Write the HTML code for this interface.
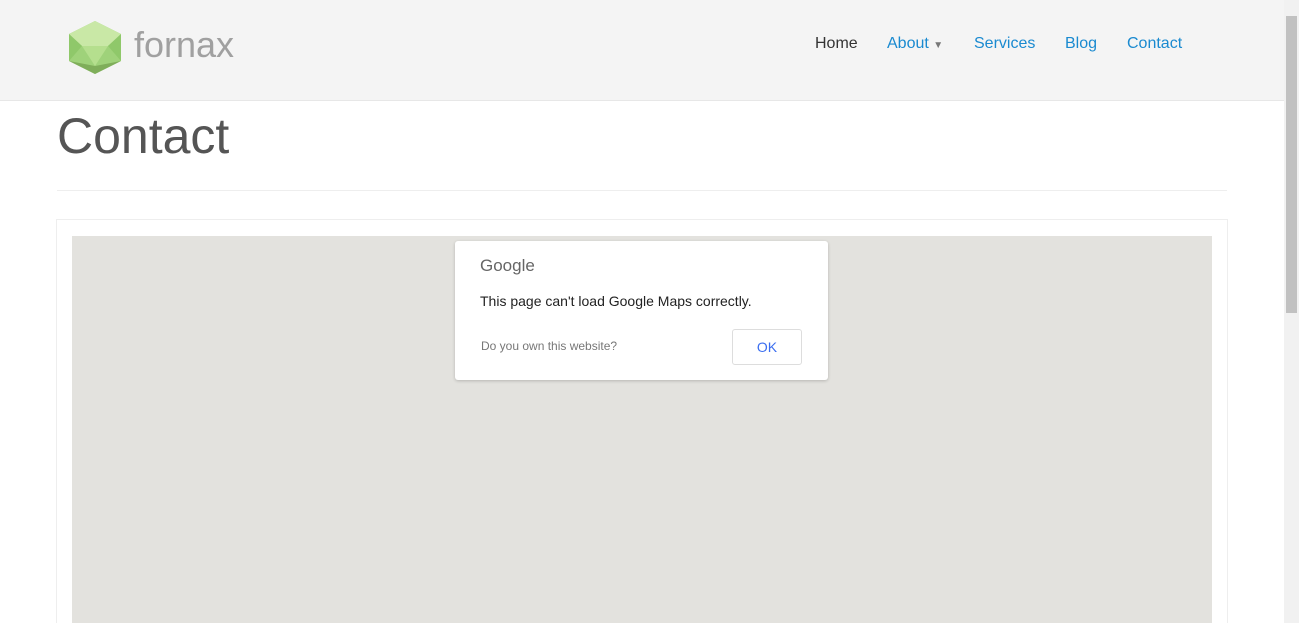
<!DOCTYPE html>
<html><head><style>
html,body{margin:0;width:1299px;height:623px;overflow:hidden;background:#fff;font-family:"Liberation Sans",sans-serif;position:relative}
.nav{position:absolute;left:0;top:0;width:1284px;height:100px;background:#f4f4f4;border-bottom:1px solid #e7e7e7}
.nav a{position:absolute;top:35px;font-size:16px;color:#1a8ad0;text-decoration:none}
.sb{position:absolute;right:0;top:0;width:15px;height:623px;background:#f1f1f1}
.th{position:absolute;right:2px;top:16px;width:11px;height:297px;background:#c1c1c1}
</style></head><body>
<div class="nav">
<svg style="position:absolute;left:68px;top:21px" width="54" height="53" viewBox="0 0 54 53">
<polygon points="27,0 53,13 53,40 27,53 1,40 1,13" fill="#9fd27a"/>
<polygon points="27,0 53,13 40,25 14,25 1,13" fill="#c9e8a6"/>
<polygon points="14,25 40,25 27,45" fill="#b5df8e"/>
<polygon points="1,40 27,53 53,40 27,45" fill="#7fae5a"/>
<polygon points="1,13 14,25 1,40" fill="#8fc86a"/>
<polygon points="53,13 40,25 53,40" fill="#8fc86a"/>
</svg>
<div style="position:absolute;left:134px;top:25px;font-size:36px;color:#a0a0a0;line-height:40px">fornax</div>
<a style="left:815px;color:#333">Home</a>
<a style="left:887px">About <span style="font-size:10px;color:#777">▼</span></a>
<a style="left:974px">Services</a>
<a style="left:1065px">Blog</a>
<a style="left:1127px">Contact</a>
</div>
<div style="position:absolute;left:57px;top:107px;font-size:50px;color:#555">Contact</div>
<div style="position:absolute;left:57px;top:190px;width:1170px;border-top:1px solid #eee"></div>
<div style="position:absolute;left:56px;top:219px;width:1170px;height:420px;border:1px solid #eee"></div>
<div style="position:absolute;left:72px;top:236px;width:1140px;height:400px;background:#e3e2de"></div>
<div style="position:absolute;left:455px;top:241px;width:373px;height:139px;background:#fff;border-radius:3px;box-shadow:0 1px 3px rgba(0,0,0,.2)">
<div style="position:absolute;left:25px;top:15px;font-size:17px;color:#666">Google</div>
<div style="position:absolute;left:25px;top:52px;font-size:14px;color:#222">This page can't load Google Maps correctly.</div>
<div style="position:absolute;left:26px;top:98px;font-size:12px;color:#777">Do you own this website?</div>
<div style="position:absolute;left:277px;top:88px;width:68px;height:34px;border:1px solid #ddd;border-radius:3px;text-align:center;line-height:34px;font-size:14px;color:#3b6ef0">OK</div>
</div>
<div class="sb"><div class="th"></div></div>
</body></html>
